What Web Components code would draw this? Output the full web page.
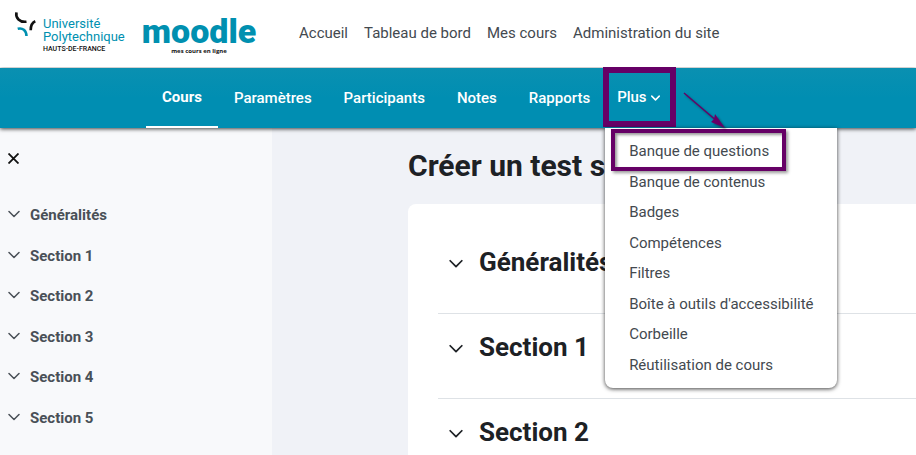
<!DOCTYPE html>
<html lang="fr">
<head>
<meta charset="utf-8">
<meta name="viewport" content="width=device-width, initial-scale=1">
<title>Créer un test</title>
<style>
  html, body { margin: 0; height: 100%; }
  body { font-family: Roboto, "Liberation Sans", sans-serif; font-size: 15px; line-height: 1.5; color: #1d2125; background: #f0f2f7; }
</style>
</head>
<body>
<course-page></course-page>
<script>
const define = (name, html) => customElements.define(name, class extends HTMLElement {
  connectedCallback() {
    if (this.shadowRoot) return;
    this.attachShadow({ mode: 'open' }).innerHTML = html;
  }
});

define('chevron-icon', `
<style>
  :host { display: block; flex: none; width: 12px; }
  svg { display: block; width: 100%; fill: none; stroke: currentColor; stroke-width: var(--chevron-stroke, 1.5); stroke-linecap: round; stroke-linejoin: round; }
</style>
<svg viewBox="0 0 12 8"><path d="M1 1.5 6 6.5 11 1.5"/></svg>`);

define('university-logo', `
<style>
  :host { display: flex; align-items: flex-start; color: #0090b0; }
  svg { flex: none; width: 24px; height: 28px; fill: none; stroke-width: 2.6; }
  .name { display: flex; flex-direction: column; padding: 6px 0 0 5px; font: 400 13px/13px Roboto, sans-serif; white-space: nowrap; }
  .region { color: #111; font: 500 7px/12px Roboto, sans-serif; }
</style>
<svg viewBox="0 0 24 28">
  <path stroke="#111" d="M2.4 1.4C1.5 7 5.5 11.5 12.5 10.7M16.7 19.2C16.7 14.5 18 11.7 21.3 10.3"/>
  <path stroke="#0090b0" d="M3.7 17.8C8.5 16.5 12.3 19.2 12.5 25"/>
</svg>
<span class="name"><span>Université</span><span>Polytechnique</span><span class="region">HAUTS-DE-FRANCE</span></span>`);

define('moodle-logo', `
<style>
  :host { display: flex; flex-direction: column; align-items: center; }
  .word { color: #0090b0; font: 900 34px/34px Roboto, sans-serif; }
  .tag { color: #111; font: 700 6px/6px "Open Sans", sans-serif; }
</style>
<span class="word">moodle</span><span class="tag">mes cours en ligne</span>`);

define('site-header', `
<style>
  :host { display: flex; align-items: center; box-sizing: border-box; min-height: 68px; padding: 0 14px; background: #fff; }
  university-logo { align-self: flex-start; padding-top: 11px; width: 129px; }
  moodle-logo { align-self: flex-start; padding-top: 14px; width: 112px; }
  nav { display: flex; gap: 16px; margin-left: 44px; padding-bottom: 2px; }
  a { color: #43494f; text-decoration: none; white-space: nowrap; }
</style>
<university-logo></university-logo><moodle-logo></moodle-logo>
<nav aria-label="Site"><a href="#">Accueil</a><a href="#">Tableau de bord</a><a href="#">Mes cours</a><a href="#">Administration du site</a></nav>`);

define('more-menu', `
<style>
  :host { display: block; box-sizing: border-box; width: 232px; padding: 8px 0; background: #fff; border-radius: 0 0 8px 8px; box-shadow: 0 1px 4px rgba(0,0,0,.75); }
  a { display: block; padding: 4px 24px; color: #43494f; text-decoration: none; white-space: nowrap; }
  .marked { position: relative; }
  .marked::after { content: ""; position: absolute; inset: -7px 51px -4px 6px; border: 4px solid #660066; box-shadow: 2px 2px 3px rgba(0,0,0,.4), inset 2px 2px 3px rgba(0,0,0,.4); }
</style>
<a href="#" class="marked">Banque de questions</a><a href="#">Banque de contenus</a><a href="#">Badges</a><a href="#">Compétences</a><a href="#">Filtres</a><a href="#">Boîte à outils d'accessibilité</a><a href="#">Corbeille</a><a href="#">Réutilisation de cours</a>`);

define('course-nav', `
<style>
  :host { display: flex; box-sizing: border-box; height: 60px; padding-left: 146px; position: relative; z-index: 2; background: linear-gradient(#0a90b1, #008eb2 50%); box-shadow: 0 1px 4px rgba(0,0,0,.75); clip-path: inset(-1px 0 -400px 0); }
  a, button { box-sizing: border-box; padding: 0 16px; color: #fff; font: 500 15px/60px Roboto, sans-serif; text-decoration: none; white-space: nowrap; }
  .active { font-weight: 700; line-height: 58px; border-bottom: 2px solid #fff; }
  .more { position: relative; margin: -1px 0 0 -3px; }
  button { display: flex; align-items: center; gap: 4px; width: 73px; height: 60px; padding: 0 8px; border: 6px solid #660066; background: none; line-height: 46px; }
  button chevron-icon { --chevron-stroke: 2; width: 9px; padding-top: 2px; }
  more-menu { position: absolute; top: 61px; left: 2px; }
  .arrow { position: absolute; left: 78px; top: 23px; width: 48px; height: 42px; z-index: 1; filter: drop-shadow(2px 2px 1px rgba(0,0,0,.4)); }
</style>
<a href="#" class="active" aria-current="page">Cours</a><a href="#">Paramètres</a><a href="#">Participants</a><a href="#">Notes</a><a href="#">Rapports</a>
<div class="more">
  <button type="button" aria-expanded="true">Plus<chevron-icon></chevron-icon></button>
  <more-menu></more-menu>
  <svg class="arrow" viewBox="0 0 48 42"><path d="M3 3 37 32" stroke="#660066" stroke-width="1.5"/><path d="m44 38-14-6 3-3 1-5Z" fill="#660066"/></svg>
</div>`);

define('index-item', `
<style>
  :host { display: block; }
  a { display: flex; align-items: center; gap: 10px; padding: 9px 0; color: #495057; font-weight: 700; text-decoration: none; }
  chevron-icon { padding-bottom: 2px; }
</style>
<a href="#"><chevron-icon></chevron-icon><slot></slot></a>`);

define('course-index', `
<style>
  :host { display: block; flex: none; box-sizing: border-box; width: 272px; padding: 22px 8px 0; background: #f8f9fb; }
  button { display: block; margin: 0 0 28px; padding: 3px 0; border: 0; background: none; }
  svg { display: block; width: 11px; height: 11px; stroke: #111; stroke-width: 1.8; }
</style>
<button type="button" aria-label="Fermer"><svg viewBox="0 0 11 11"><path d="M.5.5l10 10m0-10-10 10"/></svg></button>
<nav aria-label="Sections"><index-item>Généralités</index-item><index-item>Section 1</index-item><index-item>Section 2</index-item><index-item>Section 3</index-item><index-item>Section 4</index-item><index-item>Section 5</index-item></nav>`);

define('course-section', `
<style>
  :host { display: flex; align-items: center; gap: 16px; box-sizing: border-box; height: 85px; padding: 0 11px 18px; border-top: 1px solid #dee2e6; }
  :host(:first-child) { border-top: 0; }
  chevron-icon { width: 14px; padding-top: 4px; }
  h2 { margin: 0; font-size: 26px; font-weight: 700; line-height: 34px; white-space: nowrap; }
</style>
<chevron-icon></chevron-icon><h2><slot></slot></h2>`);

define('course-main', `
<style>
  :host { display: block; flex: 1; min-width: 0; padding: 18px 0 0 136px; }
  h1 { margin: 0 0 18px; font-size: 30px; line-height: 40px; font-weight: 700; white-space: nowrap; }
  .card { padding: 24px 0 0 30px; background: #fff; border-radius: 8px 0 0 0; }
</style>
<h1>Créer un test s</h1>
<div class="card"><course-section>Généralités</course-section><course-section>Section 1</course-section><course-section>Section 2</course-section></div>`);

define('course-page', `
<style>
  :host { display: flex; flex-direction: column; height: 100vh; overflow: hidden; }
  .body { display: flex; flex: 1; min-height: 0; }
</style>
<site-header></site-header><course-nav></course-nav>
<div class="body"><course-index></course-index><course-main></course-main></div>`);
</script>
</body>
</html>
